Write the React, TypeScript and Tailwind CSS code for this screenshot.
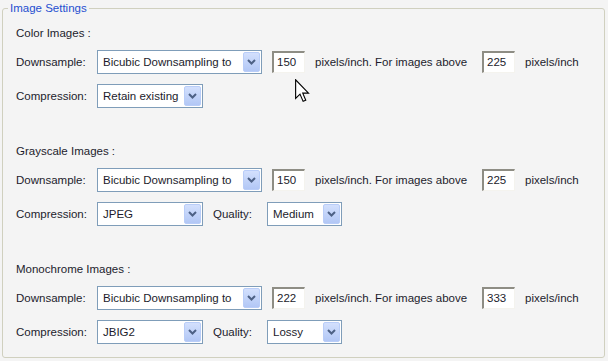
import React from "react";

const font = { fontFamily: '"Liberation Sans", Arial, sans-serif' };

function Chevron() {
  return (
    <svg width="9" height="6" viewBox="0 0 9 6">
      <path d="M1 1 L4.5 4.5 L8 1" fill="none" stroke="#4d6185" strokeWidth="2" />
    </svg>
  );
}

function Select({ w, text }: { w: string; text: string }) {
  return (
    <div className={`flex h-[24px] items-stretch border border-[#7f9db9] bg-white p-[1px] ${w}`}>
      <div className="flex flex-1 items-center pl-[4px] text-[#1c1c2c]">{text}</div>
      <div className="flex w-[17px] items-center justify-center rounded-[2px] border border-[#b9cdf8] bg-gradient-to-b from-[#d3e0fd] to-[#b2c7f5]">
        <Chevron />
      </div>
    </div>
  );
}

function Input({ v }: { v: string }) {
  return (
    <div className="flex h-[22px] w-[33px] items-center border-b border-l-2 border-r border-t-2 border-b-[#f4f3ee] border-l-[#8e8d84] border-r-[#f4f3ee] border-t-[#8e8d84] bg-white pl-[3px] text-[#1c1c2c]">
      {v}
    </div>
  );
}

function DownRow({ a, b }: { a: string; b: string }) {
  return (
    <div className="flex h-[24px] items-center">
      <div className="w-[81px]">Downsample:</div>
      <Select w="w-[165px]" text="Bicubic Downsampling to" />
      <div className="ml-[10px]">
        <Input v={a} />
      </div>
      <div className="ml-[10px] w-[167px]">pixels/inch. For images above</div>
      <Input v={b} />
      <div className="ml-[10px]">pixels/inch</div>
    </div>
  );
}

function CompRow({ comp, quality }: { comp: string; quality?: string }) {
  return (
    <div className="flex h-[24px] items-center">
      <div className="w-[81px]">Compression:</div>
      <Select w="w-[106px]" text={comp} />
      {quality && (
        <>
          <div className="ml-[10px] w-[54px]">Quality:</div>
          <Select w="w-[75px]" text={quality} />
        </>
      )}
    </div>
  );
}

function Section({
  title,
  a,
  b,
  comp,
  quality,
  first,
}: {
  title: string;
  a: string;
  b: string;
  comp: string;
  quality?: string;
  first?: boolean;
}) {
  return (
    <div className={first ? "flex flex-col" : "mt-[37px] flex flex-col"}>
      <div className="h-[13px] leading-[13px]">{title}</div>
      <div className="mt-[10px]">
        <DownRow a={a} b={b} />
      </div>
      <div className="mt-[10px]">
        <CompRow comp={comp} quality={quality} />
      </div>
    </div>
  );
}

export default function App() {
  return (
    <div
      className="relative h-[361px] w-[608px] overflow-hidden bg-[#f4f4f4] pl-[2px] pt-[2px] text-[11.5px] leading-[13px] text-[#1c1c2c]"
      style={font}
    >
      <fieldset className="h-[356px] w-[603px] rounded-[3px] border border-[#d0d0bf] p-0">
        <legend className="ml-[5px] px-[2px] leading-[13px] text-[#1f4fd0]">Image Settings</legend>
        <div className="px-[13px] pt-[12px]">
          <Section first title="Color Images :" a="150" b="225" comp="Retain existing" />
          <Section title="Grayscale Images :" a="150" b="225" comp="JPEG" quality="Medium" />
          <Section title="Monochrome Images :" a="222" b="333" comp="JBIG2" quality="Lossy" />
        </div>
      </fieldset>
      <svg
        className="absolute left-[295px] top-[79px]"
        width="15"
        height="24"
        viewBox="0 0 12 19"
      >
        <path
          d="M0.5 0.5 L0.5 15.5 L4 12 L6.5 17.8 L8.6 16.9 L6.2 11.2 L10.8 11.2 Z"
          fill="#fff"
          stroke="#000"
          strokeWidth="0.9"
          strokeLinejoin="miter"
        />
      </svg>
    </div>
  );
}
